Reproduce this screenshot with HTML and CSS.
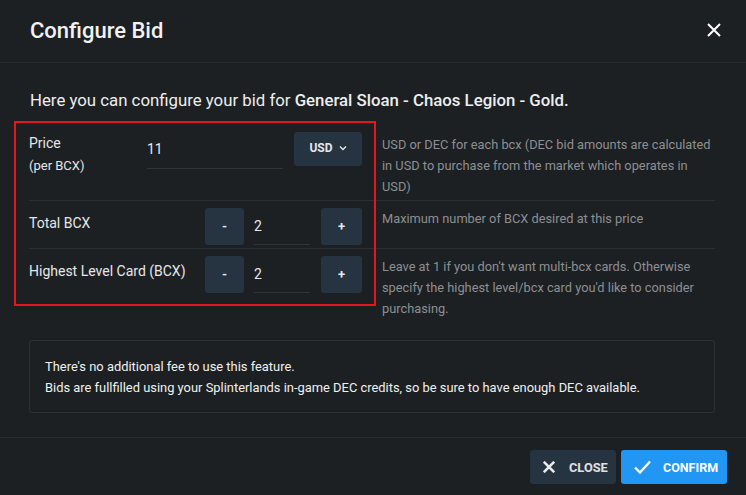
FILE: index.html
```html
<!DOCTYPE html>
<html lang="en">
<head>
<meta charset="utf-8">
<title>Configure Bid</title>
<link rel="stylesheet" href="styles.css">
</head>
<body>
<div class="modal">
  <header class="modal-header">
    <h1 class="modal-title">Configure Bid</h1>
    <button class="icon-close" aria-label="Close">
      <svg width="14" height="14" viewBox="0 0 14 14"><path d="M1 1L13 13M13 1L1 13" stroke="#fff" stroke-width="2" fill="none"/></svg>
    </button>
  </header>
  <main class="modal-body">
    <p class="intro">Here you can configure your bid for <strong>General Sloan - Chaos Legion - Gold.</strong></p>
    <div class="form-wrap">
      <div class="highlight"></div>
      <div class="form-row">
        <div class="label">Price<br><span class="sub">(per BCX)</span></div>
        <div class="controls price-controls">
          <div class="text-input wide">11</div>
          <button class="btn-dark currency">USD
            <svg width="8" height="6" viewBox="0 0 8 6"><path d="M1 1.5L4 4.5L7 1.5" stroke="#e5e7ea" stroke-width="1.4" fill="none"/></svg>
          </button>
        </div>
        <div class="desc">USD or DEC for each bcx (DEC bid amounts are calculated in USD to purchase from the market which operates in USD)</div>
      </div>
      <div class="form-row">
        <div class="label label-pad">Total BCX</div>
        <div class="controls stepper">
          <button class="btn-dark step">-</button>
          <div class="text-input narrow">2</div>
          <button class="btn-dark step">+</button>
        </div>
        <div class="desc">Maximum number of BCX desired at this price</div>
      </div>
      <div class="form-row last">
        <div class="label label-pad">Highest Level Card (BCX)</div>
        <div class="controls stepper">
          <button class="btn-dark step">-</button>
          <div class="text-input narrow">2</div>
          <button class="btn-dark step">+</button>
        </div>
        <div class="desc">Leave at 1 if you don't want multi-bcx cards. Otherwise specify the highest level/bcx card you'd like to consider purchasing.</div>
      </div>
    </div>
    <div class="info-box">
      <p>There's no additional fee to use this feature.</p>
      <p>Bids are fullfilled using your Splinterlands in-game DEC credits, so be sure to have enough DEC available.</p>
    </div>
  </main>
  <footer class="modal-footer">
    <button class="btn btn-close">
      <svg width="12" height="12" viewBox="0 0 12 12"><path d="M0.8 0.8L11.2 11.2M11.2 0.8L0.8 11.2" stroke="#e8eaed" stroke-width="2.6" fill="none"/></svg>
      <span>CLOSE</span>
    </button>
    <button class="btn btn-confirm">
      <svg width="17" height="14" viewBox="0 0 17 14"><path d="M1 7.5L6 12.5L16 1.5" stroke="#fff" stroke-width="2.4" fill="none"/></svg>
      <span>CONFIRM</span>
    </button>
  </footer>
</div>
</body>
</html>
```

FILE: styles.css
```css
* { box-sizing: border-box; }
html, body {
  margin: 0;
  padding: 0;
  background: #1c2023;
  font-family: Roboto, "Liberation Sans", Arial, sans-serif;
  color: #e8e9eb;
}
.modal {
  width: 746px;
  height: 495px;
  background: #1c2023;
  display: flex;
  flex-direction: column;
}
.modal-header {
  height: 63px;
  display: flex;
  align-items: center;
  justify-content: space-between;
  padding: 0 25px 2px 30px;
  border-bottom: 1px solid #272b30;
}
.modal-title {
  margin: 0;
  font-size: 22px;
  font-weight: 500;
  color: #f2f2f2;
  letter-spacing: 0;
}
.icon-close {
  background: none;
  border: 0;
  padding: 0;
  width: 14px;
  height: 14px;
  display: flex;
  cursor: pointer;
}
.modal-body {
  padding: 26px 31px 24px 29px;
  border-bottom: 1px solid #272b30;
}
.intro {
  margin: 0 0 0 1px;
  font-size: 16.8px;
  line-height: 22px;
  color: #eeeeee;
}
.intro strong { font-weight: 500; }
.form-wrap {
  position: relative;
  margin-top: 16px;
}
.highlight {
  position: absolute;
  left: -15px;
  top: -6px;
  width: 362px;
  height: 185px;
  border: 2px solid #e3171d;
  pointer-events: none;
}
.form-row {
  display: grid;
  grid-template-columns: 118px 215px 1fr;
  padding: 7px 0 3px;
  border-bottom: 1px solid #2a2e33;
}
.form-row.last { border-bottom: 0; }
.label {
  font-size: 14px;
  line-height: 16px;
  color: #e6e7e9;
  padding-top: 1px;
  white-space: nowrap;
}
.label .sub {
  display: inline-block;
  margin-top: 7px;
  font-size: 13px;
}
.label-pad { padding-top: 7px; }
.controls {
  display: flex;
  align-items: flex-start;
}
.price-controls {
  justify-content: space-between;
  margin-top: -2px;
}
.text-input {
  font-size: 14px;
  color: #e8e9eb;
  border-bottom: 1px solid #30353a;
}
.text-input.wide {
  width: 136px;
  height: 37px;
  padding-top: 9px;
}
.text-input.narrow {
  width: 56px;
  height: 37px;
  padding-top: 10px;
  margin: 0 11px 0 10px;
}
.stepper {
  justify-content: flex-end;
}
.btn-dark {
  background: #263340;
  border: 0;
  border-radius: 3px;
  color: #e5e7ea;
  font-family: inherit;
  font-weight: 700;
  cursor: pointer;
}
.currency {
  width: 68px;
  height: 34px;
  font-size: 12px;
  display: flex;
  align-items: center;
  justify-content: center;
  gap: 6px;
  padding: 0 0 2px;
}
.step {
  width: 39px;
  height: 37px;
  font-size: 13px;
  padding: 0;
}
.stepper .step:last-child { width: 41px; }
.desc {
  padding-left: 20px;
  font-size: 12.8px;
  line-height: 21px;
  color: #8d8f92;
}
.info-box {
  margin-top: 18px;
  border: 1px solid #2d3136;
  border-radius: 3px;
  padding: 15px 15px 14px;
}
.info-box p {
  margin: 0;
  font-size: 12.9px;
  line-height: 21px;
  color: #f0f0f0;
}
.modal-footer {
  display: flex;
  justify-content: flex-end;
  gap: 5px;
  padding: 12px 19px 0;
}
.btn {
  height: 34px;
  border: 0;
  border-radius: 3px;
  display: flex;
  align-items: center;
  font-family: inherit;
  font-size: 12.5px;
  font-weight: 700;
  cursor: pointer;
  padding: 0 6px 0 13px;
}
.btn svg { flex-shrink: 0; }
.btn-close {
  width: 86px;
  background: #263340;
  color: #e0e2e5;
  gap: 14px;
}
.btn-close span { font-size: 12.8px; }
.btn-confirm {
  width: 106px;
  background: #2196f3;
  color: #ffffff;
  gap: 12px;
}
```
